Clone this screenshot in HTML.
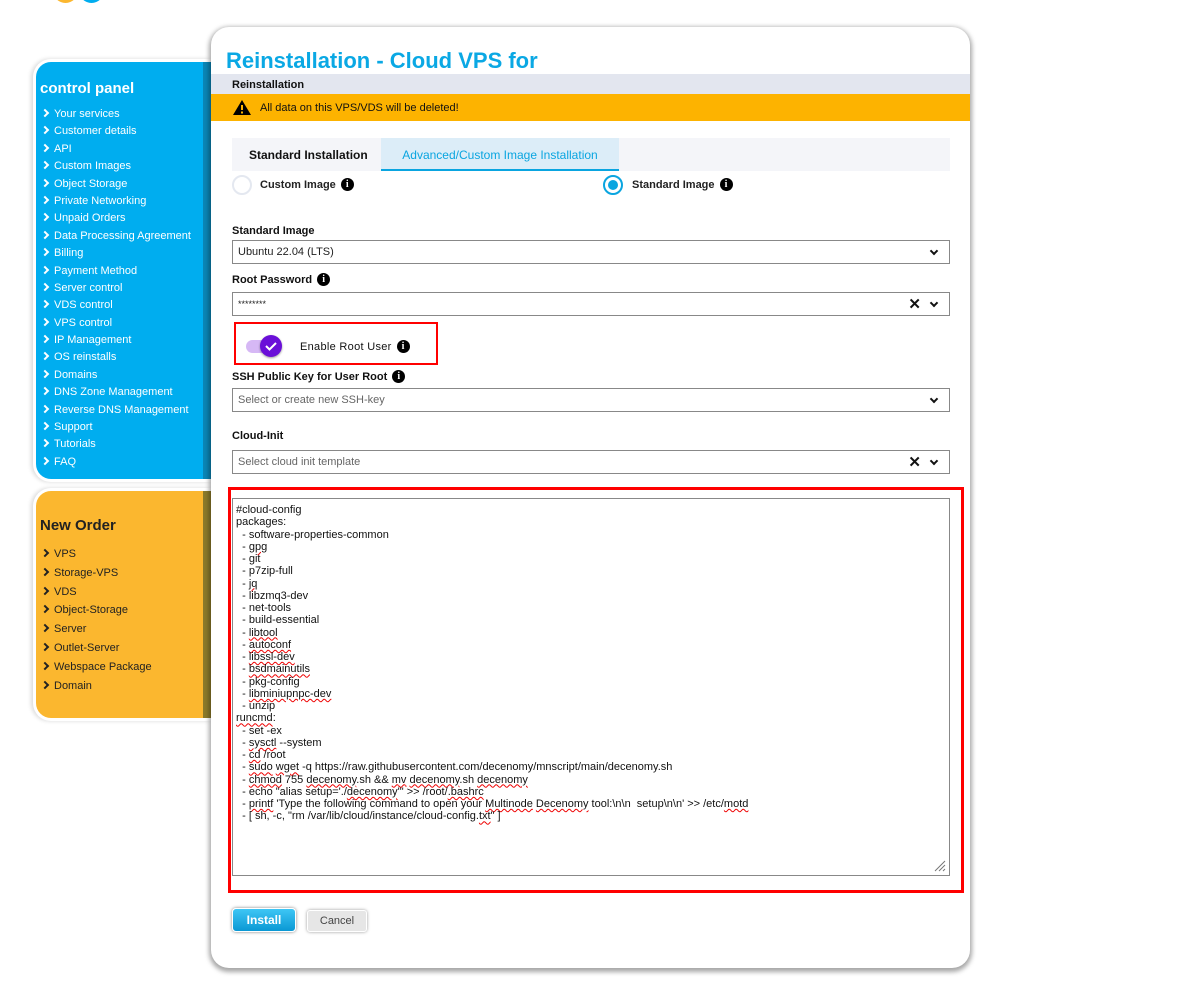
<!DOCTYPE html>
<html><head><meta charset="utf-8"><style>
*{box-sizing:border-box;margin:0;padding:0}
body{width:1183px;height:1000px;background:#fff;font-family:"Liberation Sans",Arial,sans-serif;position:relative;overflow:hidden;color:#111}
.abs{position:absolute}
.side{position:absolute;left:33px;width:178px;border-radius:18px 0 0 18px;box-shadow:-2px 0 4px rgba(0,0,0,.15);border:3px solid #fff;border-right:none}
.side ul{list-style:none;position:absolute;left:6px}
.side li{font-size:11px;height:17.4px;line-height:17.4px;white-space:nowrap}
.side li:before{content:"";display:inline-block;width:4px;height:4px;border-right:2px solid currentColor;border-top:2px solid currentColor;transform:rotate(45deg);margin:0 6px 1px 0}
.blue{background:#00adef;color:#fff}
.yel{background:#fbb72f;color:#222}
.main{position:absolute;left:211px;top:27px;width:759px;height:941px;background:#fff;border-radius:18px;box-shadow:0 2px 5px 2px rgba(0,0,0,.35)}
.lbl{position:absolute;left:21px;font-size:11px;font-weight:bold;color:#111;display:flex;align-items:center}
.sel{position:absolute;left:21px;width:718px;height:24px;border:1px solid #888;font-size:11px;line-height:22px;padding-left:5px;color:#222}
.chev{position:absolute;right:12px;top:7px;width:6px;height:6px;border-right:2.5px solid #111;border-bottom:2.5px solid #111;transform:rotate(45deg)}
.x{position:absolute;right:28px;top:1px;font-size:15px;font-weight:bold;color:#111}
.info{display:inline-block;width:13px;height:13px;border-radius:50%;background:#000;color:#fff;font-size:10px;font-weight:bold;text-align:center;line-height:13px;margin-left:5px;font-family:"Liberation Serif",serif}
.ta{position:absolute;left:21px;top:471px;width:718px;height:378px;border:1px solid #888;font-size:11px;line-height:12.25px;padding:5px 3px;white-space:pre;color:#111}
.u{text-decoration:underline wavy #e00;text-decoration-thickness:1px;text-underline-offset:1px}
</style></head><body>
<div class="abs" style="left:53px;top:-22px;width:25px;height:25px;border-radius:50%;background:#fbb72f"></div>
<div class="abs" style="left:79px;top:-22px;width:25px;height:25px;border-radius:50%;background:#00adef"></div>

<div class="side blue" style="top:59px;height:423px">
<div class="abs" style="right:0;top:0;width:8px;height:100%;background:#0a85b5"></div>
<div class="abs" style="left:4px;top:18px;font-size:15px;font-weight:bold">control panel</div>
<ul style="top:44px">
<li>Your services</li><li>Customer details</li><li>API</li><li>Custom Images</li><li>Object Storage</li><li>Private Networking</li><li>Unpaid Orders</li><li>Data Processing Agreement</li><li>Billing</li><li>Payment Method</li><li>Server control</li><li>VDS control</li><li>VPS control</li><li>IP Management</li><li>OS reinstalls</li><li>Domains</li><li>DNS Zone Management</li><li>Reverse DNS Management</li><li>Support</li><li>Tutorials</li><li>FAQ</li>
</ul></div>

<div class="side yel" style="top:488px;height:233px">
<div class="abs" style="right:0;top:0;width:8px;height:100%;background:#8b7a2a"></div>
<div class="abs" style="left:4px;top:26px;font-size:15px;font-weight:bold">New Order</div>
<ul style="top:55px;color:#222">
<li style="height:18.8px">VPS</li><li style="height:18.8px">Storage-VPS</li><li style="height:18.8px">VDS</li><li style="height:18.8px">Object-Storage</li><li style="height:18.8px">Server</li><li style="height:18.8px">Outlet-Server</li><li style="height:18.8px">Webspace Package</li><li style="height:18.8px">Domain</li>
</ul></div>

<div class="main">
<div class="abs" style="left:15px;top:21px;font-size:22px;font-weight:bold;color:#0aa8e4">Reinstallation - Cloud VPS for</div>
<div class="abs" style="left:0;top:47px;width:759px;height:20px;background:#e3e6ef;font-size:11px;font-weight:bold;line-height:22px;padding-left:21px">Reinstallation</div>
<div class="abs" style="left:0;top:67px;width:759px;height:27px;background:#fdb300;font-size:11px;line-height:29px;padding-left:49px">All data on this VPS/VDS will be deleted!</div>
<svg class="abs" style="left:22px;top:73px" width="18" height="15"><polygon points="9,0 18,15 0,15" fill="#000"/><rect x="8" y="5" width="2" height="5" fill="#fdb300"/><rect x="8" y="11.5" width="2" height="2" fill="#fdb300"/></svg>

<div class="abs" style="left:21px;top:111px;width:718px;height:33px;background:#f4f5f9"></div>
<div class="abs" style="left:38px;top:121px;font-size:12px;font-weight:bold">Standard Installation</div>
<div class="abs" style="left:170px;top:111px;width:238px;height:33px;background:#dcedf8;border-bottom:2px solid #0aa5e0;font-size:12px;color:#0aa5e0;line-height:34px;text-align:center">Advanced/Custom Image Installation</div>

<div class="abs" style="left:21px;top:148px;width:20px;height:20px;border-radius:50%;border:2px solid #e4e8f0"></div>
<div class="lbl" style="left:49px;top:151px;color:#222">Custom Image<span class="info">i</span></div>
<div class="abs" style="left:392px;top:148px;width:20px;height:20px;border-radius:50%;border:2px solid #0aa5e0"><div style="margin:3px;width:10px;height:10px;border-radius:50%;background:#0aa5e0"></div></div>
<div class="lbl" style="left:421px;top:151px;color:#222">Standard Image<span class="info">i</span></div>

<div class="lbl" style="top:198px">Standard Image</div>
<div class="sel" style="top:213px">Ubuntu 22.04 (LTS)<div class="chev"></div></div>
<div class="lbl" style="top:246px">Root Password<span class="info">i</span></div>
<div class="sel" style="top:265px;font-size:9px">********<span class="x">✕</span><div class="chev"></div></div>

<div class="abs" style="left:23px;top:295px;width:204px;height:43px;border:2px solid #f00"></div>
<div class="abs" style="left:35px;top:313px;width:32px;height:13px;border-radius:7px;background:#d6b8f5"></div>
<div class="abs" style="left:49px;top:308px;width:22px;height:22px;border-radius:50%;background:#6a0fd8;box-shadow:0 1px 2px rgba(0,0,0,.4)"><svg width="22" height="22"><path d="M6 11l3.5 3.5L16 8" stroke="#fff" stroke-width="2" fill="none"/></svg></div>
<div class="lbl" style="left:89px;top:313px;font-weight:normal;letter-spacing:.3px">Enable Root User<span class="info">i</span></div>

<div class="lbl" style="top:343px">SSH Public Key for User Root<span class="info">i</span></div>
<div class="sel" style="top:361px;color:#666">Select or create new SSH-key<div class="chev"></div></div>
<div class="lbl" style="top:403px">Cloud-Init</div>
<div class="sel" style="top:423px;color:#666">Select cloud init template<span class="x">✕</span><div class="chev"></div></div>

<div class="abs" style="left:17px;top:460px;width:736px;height:406px;border:3px solid #f00"></div>
<div class="ta">#cloud-config
packages:
  - software-properties-common
  - <span class="u">gpg</span>
  - git
  - p7zip-full
  - <span class="u">jq</span>
  - libzmq3-dev
  - net-tools
  - build-essential
  - <span class="u">libtool</span>
  - <span class="u">autoconf</span>
  - <span class="u">libssl-dev</span>
  - <span class="u">bsdmainutils</span>
  - pkg-config
  - <span class="u">libminiupnpc-dev</span>
  - unzip
<span class="u">runcmd</span>:
  - set -ex
  - <span class="u">sysctl</span> --system
  - <span class="u">cd</span> /root
  - <span class="u">sudo</span> <span class="u">wget</span> -q https://raw.githubusercontent.com/decenomy/mnscript/main/decenomy.sh
  - <span class="u">chmod</span> 755 <span class="u">decenomy</span>.sh &amp;&amp; <span class="u">mv</span> <span class="u">decenomy</span>.sh <span class="u">decenomy</span>
  - echo "alias setup='./<span class="u">decenomy</span>'" &gt;&gt; /root/<span class="u">.bashrc</span>
  - <span class="u">printf</span> 'Type the following command to open your <span class="u">Multinode</span> <span class="u">Decenomy</span> tool:\n\n  setup\n\n' &gt;&gt; /etc/<span class="u">motd</span>
  - [ sh, -c, "rm /var/lib/cloud/instance/cloud-config.<span class="u">txt</span>" ]
<svg style="position:absolute;right:3px;bottom:3px" width="12" height="12"><path d="M11 1L1 11M11 5L5 11M11 9L9 11" stroke="#777" stroke-width="1"/></svg></div>

<div class="abs" style="left:21px;top:881px;width:64px;height:24px;border-radius:4px;background:linear-gradient(#3ec6f5,#0a98d4);border:1px solid #fff;box-shadow:0 0 3px rgba(0,0,0,.5);color:#fff;font-size:12px;font-weight:bold;text-align:center;line-height:22px">Install</div>
<div class="abs" style="left:96px;top:883px;width:60px;height:22px;border-radius:3px;background:#e6e6e6;border:1px solid #fff;box-shadow:0 0 3px rgba(0,0,0,.4);color:#444;font-size:11px;text-align:center;line-height:20px">Cancel</div>
</div>
</body></html>
